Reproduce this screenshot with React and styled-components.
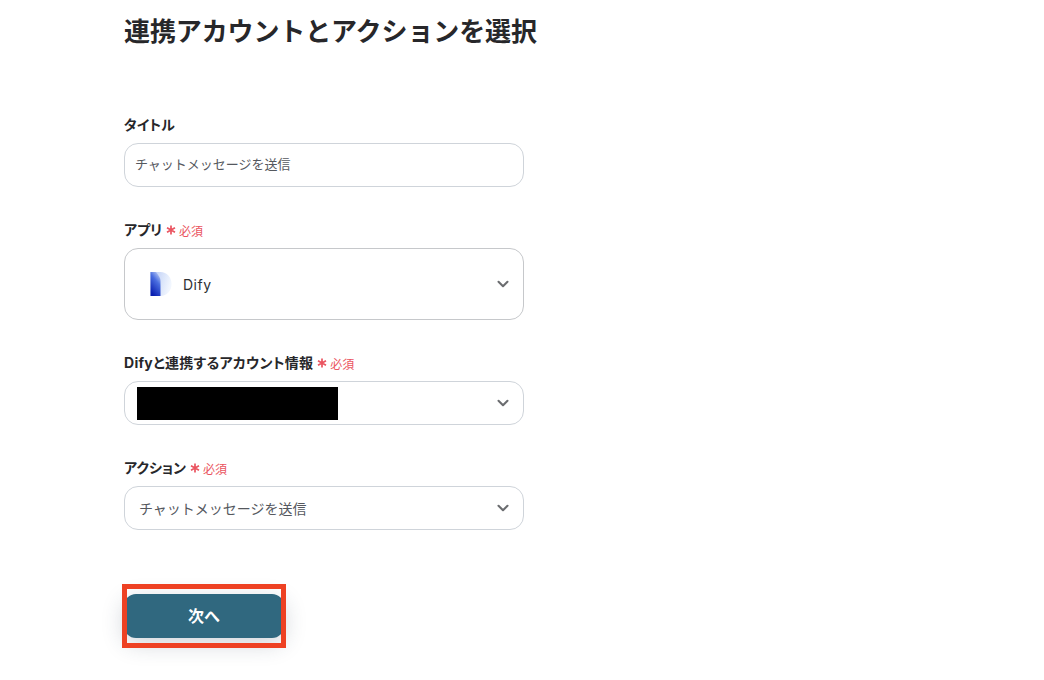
import React from "react";
import styled, { createGlobalStyle } from "styled-components";
import { FiChevronDown } from "react-icons/fi";

const Global = createGlobalStyle`
  html, body {
    margin: 0;
    padding: 0;
    background: #fff;
    overflow: hidden;
  }
  body {
    font-family: Inter, "Noto Sans CJK JP", sans-serif;
    color: #27272a;
  }
`;

const Page = styled.div`
  width: 1044px;
  height: 680px;
  padding: 14px 0 0 124px;
  box-sizing: border-box;
`;

const Title = styled.h1`
  margin: 0 0 65px;
  font-size: 26px;
  line-height: 36px;
  font-weight: 700;
  letter-spacing: -0.12px;
  color: #27272a;
`;

const Form = styled.div`
  width: 400px;
  display: flex;
  flex-direction: column;
  gap: 33px;
`;

const Field = styled.div`
  display: flex;
  flex-direction: column;
  gap: 8px;
`;

const Label = styled.div`
  display: flex;
  align-items: center;
  height: 20px;
  box-sizing: border-box;
  padding-bottom: 2px;
  font-size: 14px;
  font-weight: 700;
  font-feature-settings: "palt";
  letter-spacing: ${(p) => p.$spacing || 0}px;
  color: #27272a;
`;

const Required = styled.span`
  display: inline-flex;
  align-items: center;
  gap: 3px;
  margin: 2px 0 0 4px;
  font-size: 12px;
  font-weight: 400;
  letter-spacing: 0;
  font-feature-settings: normal;
  color: #ea5460;
`;

const Box = styled.div`
  height: ${(p) => (p.$tall ? "72px" : "44px")};
  box-sizing: border-box;
  border: 1px solid ${(p) => (p.$tall ? "#c6c8cb" : "#cfd4da")};
  border-radius: 14px;
  background: #fff;
  display: flex;
  align-items: center;
  justify-content: space-between;
  padding: 0 11.5px 0 ${(p) => p.$left || 10}px;
  font-size: 14px;
  color: #55585e;
`;

const TextBox = styled(Box)`
  padding-bottom: 3px;
  font-size: 13px;
`;

const Chevron = styled(FiChevronDown)`
  width: 18px;
  height: 18px;
  stroke-width: 2.8;
  color: #6b6d70;
`;

const AppName = styled.div`
  display: flex;
  align-items: center;
  gap: 11px;
  color: #2d2f33;
  letter-spacing: 0.5px;
`;

const Masked = styled.div`
  width: 201px;
  height: 33px;
  background: #000;
`;

const ButtonFrame = styled.div`
  position: relative;
  margin-top: 64px;
  width: 160px;
  height: 44px;
`;

const Button = styled.button`
  width: 100%;
  height: 100%;
  padding: 0 0 2px;
  border: 0;
  border-radius: 12px;
  background: #30687f;
  color: #fff;
  font-family: inherit;
  font-size: 16px;
  font-weight: 700;
  box-shadow: 0 6px 22px rgba(40, 60, 80, 0.22);
`;

const Highlight = styled.div`
  position: absolute;
  left: -2px;
  top: -10px;
  width: 164px;
  height: 64px;
  box-sizing: border-box;
  border: 5px solid #ee4123;
  pointer-events: none;
`;

function DifyLogo() {
  return (
    <svg width="22" height="24" viewBox="0 0 22 24">
      <defs>
        <linearGradient id="difyBack" x1="0" y1="0" x2="1" y2="0.3">
          <stop offset="0" stopColor="#b4c7f4" />
          <stop offset="1" stopColor="#f1f6fe" />
        </linearGradient>
        <linearGradient id="difyFront" x1="0.85" y1="0" x2="0.35" y2="1">
          <stop offset="0" stopColor="#c4d3f7" />
          <stop offset="0.4" stopColor="#4a6ee0" />
          <stop offset="1" stopColor="#0a1fb0" />
        </linearGradient>
      </defs>
      <path d="M0.5 0H10.5C16.8 0 21.5 5.2 21.5 12C21.5 18.8 16.8 24 10.5 24H0.5Z" fill="url(#difyBack)" />
      <path d="M0.5 0H6C8.8 3.5 10.5 6 10.5 9V24H0.5Z" fill="url(#difyFront)" />
    </svg>
  );
}

function Req() {
  return (
    <Required>
      <svg width="10" height="10" viewBox="0 0 10 10">
        <path d="M5 0.5V9.5M1 2.8L9 7.2M9 2.8L1 7.2" stroke="#ea5460" strokeWidth="1.7" />
      </svg>
      必須
    </Required>
  );
}

export default function App() {
  return (
    <Page>
      <Global />
      <Title>連携アカウントとアクションを選択</Title>
      <Form>
        <Field>
          <Label>タイトル</Label>
          <TextBox>チャットメッセージを送信</TextBox>
        </Field>
        <Field>
          <Label>
            アプリ
            <Req />
          </Label>
          <Box $tall $left={25}>
            <AppName>
              <DifyLogo />
              Dify
            </AppName>
            <Chevron />
          </Box>
        </Field>
        <Field>
          <Label $spacing={0.28}>
            Difyと連携するアカウント情報
            <Req />
          </Label>
          <Box $left={12}>
            <Masked />
            <Chevron />
          </Box>
        </Field>
        <Field>
          <Label>
            アクション
            <Req />
          </Label>
          <Box $left={14}>
            チャットメッセージを送信
            <Chevron />
          </Box>
        </Field>
      </Form>
      <ButtonFrame>
        <Button>次へ</Button>
        <Highlight />
      </ButtonFrame>
    </Page>
  );
}
